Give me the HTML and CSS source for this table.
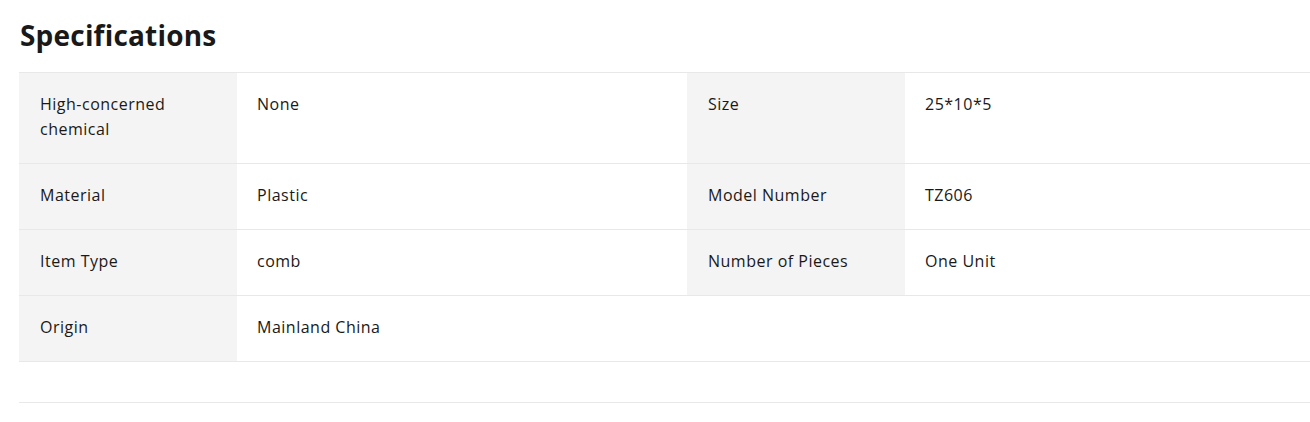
FILE: index.html
```html
<!DOCTYPE html>
<html lang="en">
<head>
    <meta charset="UTF-8">
    <meta name="viewport" content="width=device-width, initial-scale=1.0">
    <title>Specifications</title>
    <link rel="stylesheet" href="styles.css">
</head>
<body>
    <div class="specs">
        <h2 class="specs-title">Specifications</h2>

        <table class="specs-table">
            <tr>
                <td class="label">High-concerned chemical</td>
                <td class="value">None</td>
                <td class="label">Size</td>
                <td class="value">25*10*5</td>
            </tr>
            <tr>
                <td class="label">Material</td>
                <td class="value">Plastic</td>
                <td class="label">Model Number</td>
                <td class="value">TZ606</td>
            </tr>
            <tr>
                <td class="label">Item Type</td>
                <td class="value">comb</td>
                <td class="label">Number of Pieces</td>
                <td class="value">One Unit</td>
            </tr>
            <tr>
                <td class="label">Origin</td>
                <td class="value">Mainland China</td>
                <td class="value"></td>
                <td class="value"></td>
            </tr>
        </table>

        <div class="specs-end"></div>
    </div>
</body>
</html>
```

FILE: styles.css
```css
html, body {
    margin: 0;
    padding: 0;
    background: #fff;
    overflow: hidden;
}
body {
    font-family: "Open Sans", Lato, sans-serif;
    color: #191919;
}
.specs {
    padding: 0 0 0 19px;
    width: 1336px;
}
.specs-title {
    font-size: 28px;
    font-weight: 700;
    line-height: 36px;
    letter-spacing: 0.2px;
    margin: 0;
    padding: 17px 0 19px 1px;
}
.specs-table {
    width: 100%;
    border-collapse: collapse;
    table-layout: fixed;
    font-size: 16px;
    line-height: 25px;
    letter-spacing: 0.5px;
}
.specs-table tr {
    border-top: 1px solid #e8e8e8;
    border-bottom: 1px solid #e8e8e8;
}
.specs-table td {
    padding: 19px 20px 21px 21px;
    vertical-align: top;
}
.specs-table td.label {
    width: 177px;
    background: #f4f4f4;
}
.specs-table td.value {
    padding-left: 20px;
}
.specs-end {
    margin-top: 40px;
    border-top: 1px solid #e8e8e8;
}
```
